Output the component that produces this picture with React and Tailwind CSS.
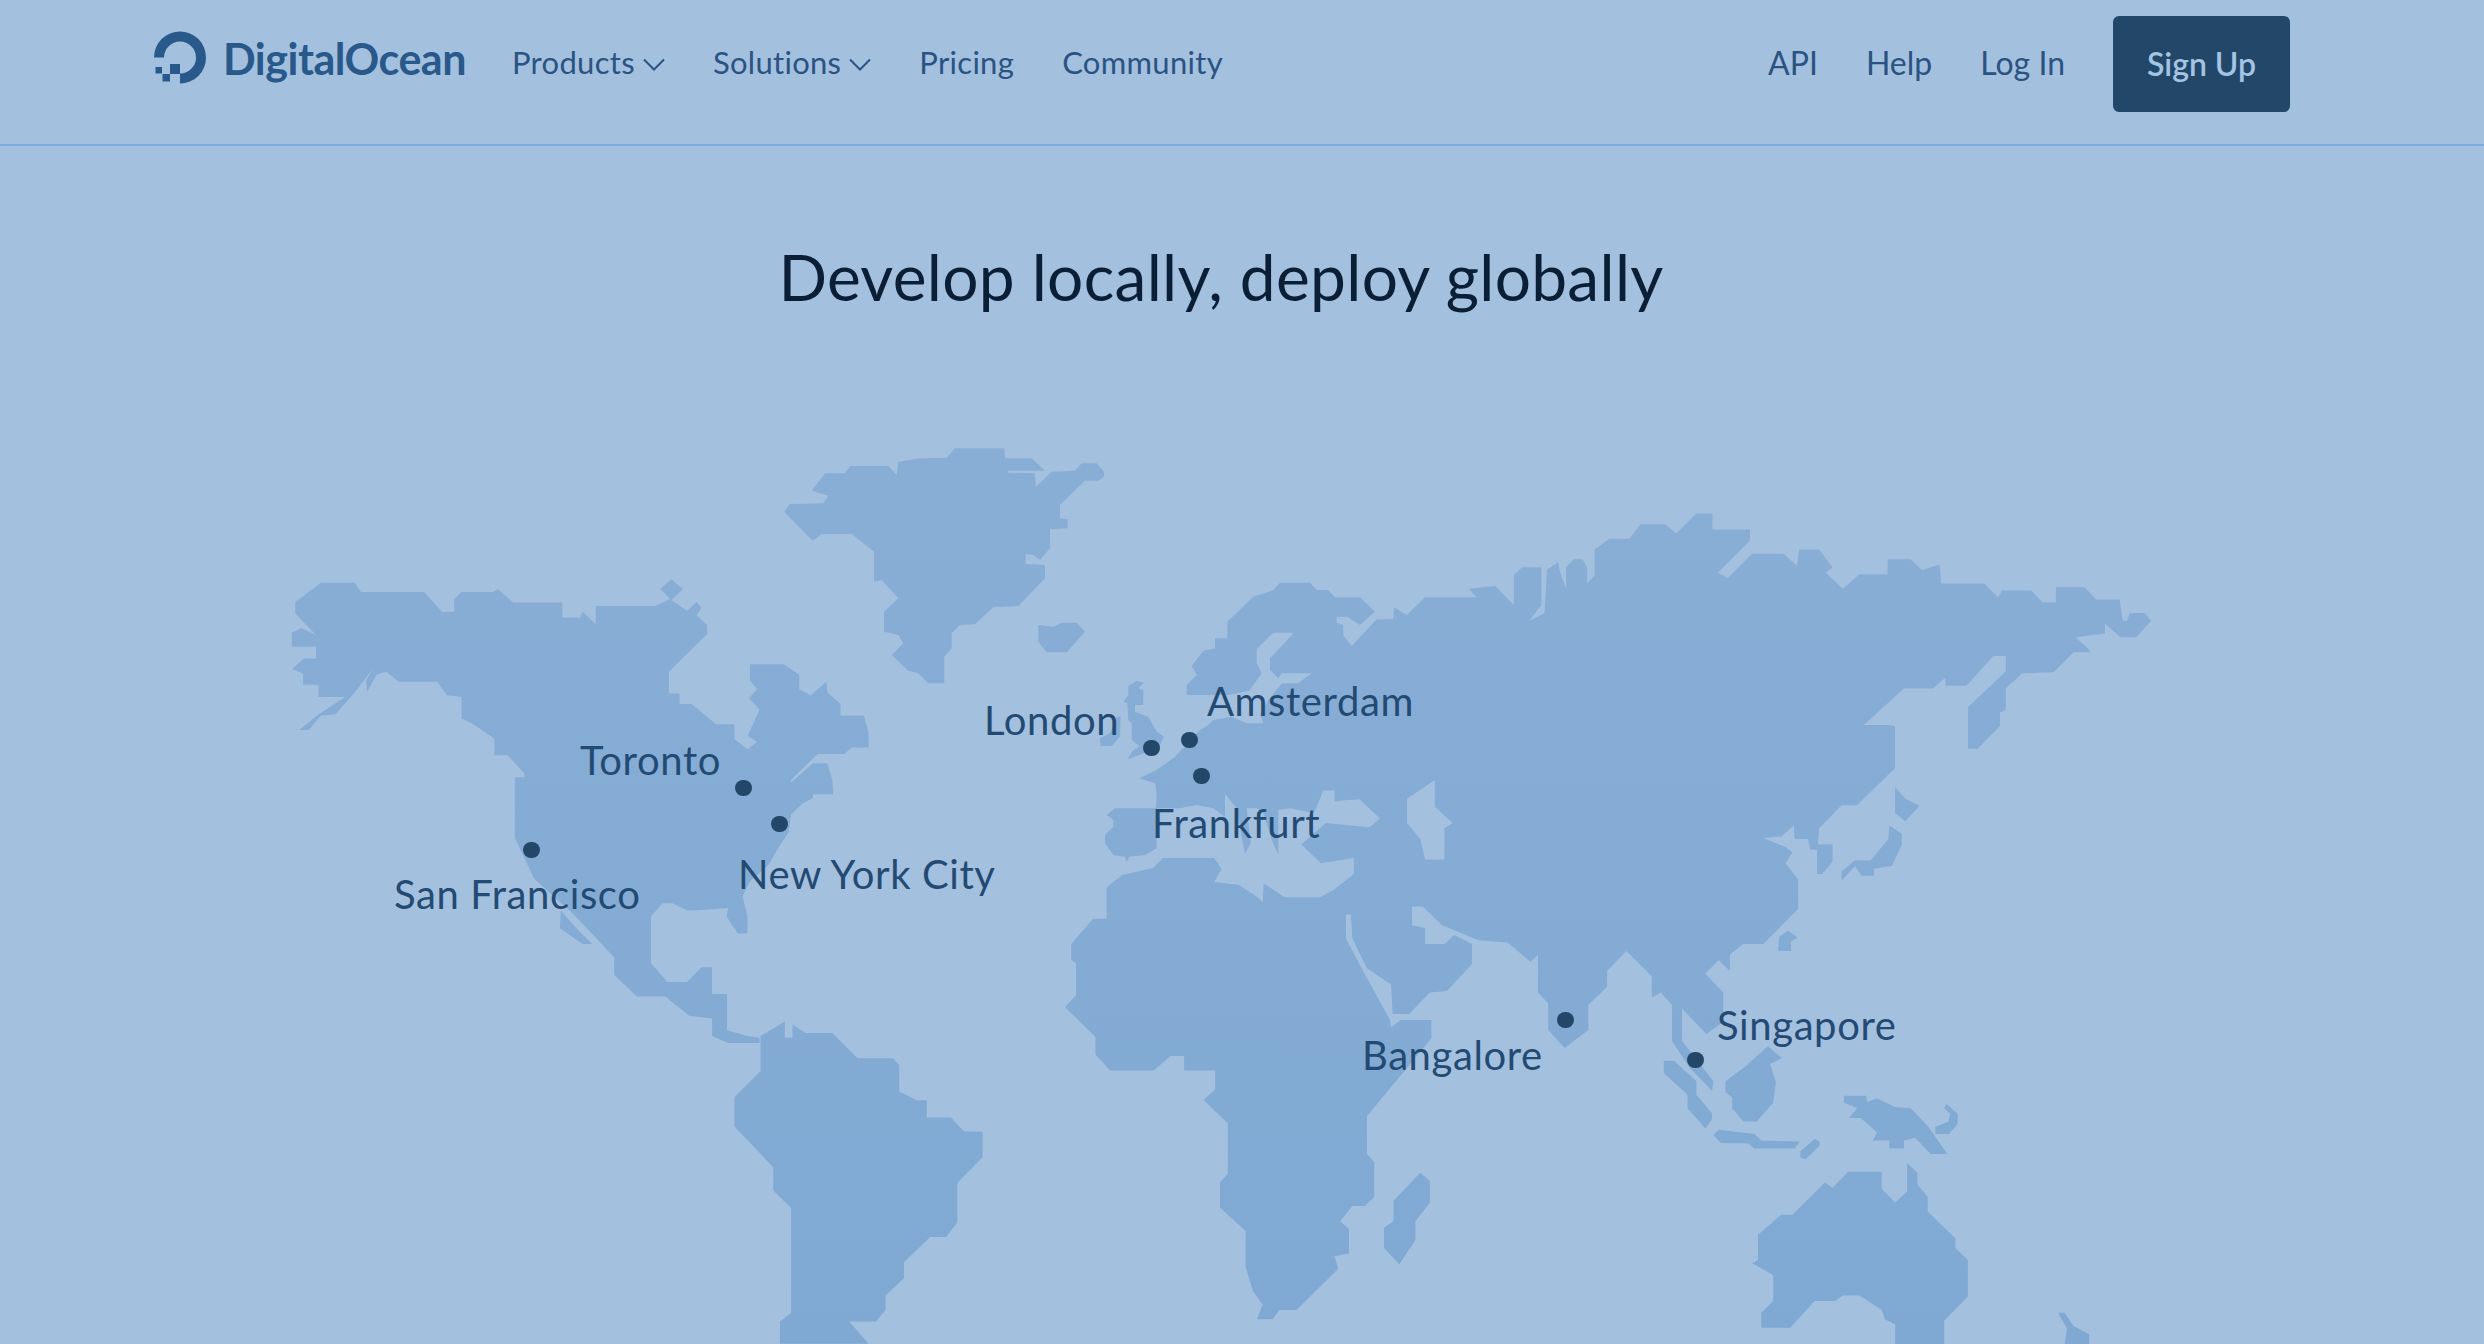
import React from 'react'

// reference crops used while tracing the map: [left, top, x zoom, y zoom]
const Z3 = [270, 430, 2.063, 1.716]
const Z4 = [1030, 500, 2.063, 1.858]
const Z5 = [1500, 500, 2.24, 1.858]
const Z6 = [770, 430, 3, 3]
const Z7 = [1090, 560, 3, 3]

const seg = (f, s) =>
    s.trim().split(/\s+/).map((p) => {
        const [x, y] = p.split(',').map(Number)
        return `${(f[0] + x / f[2]).toFixed(1)} ${(f[1] + y / f[3]).toFixed(1)}`
    })

const shape = (...parts) => 'M' + parts.flat().join('L') + 'Z'

const land = [
    // north + central america
    shape(seg(Z3, `52,295 105,262 175,262 188,278 318,278 355,312 380,312 380,290 395,278 460,278 470,273 502,296 603,296 603,322 640,322 645,312 672,333 672,302 795,302 825,290
        860,310 880,295 890,305 880,318 902,335 902,350 823,415 823,452 845,452 845,470 870,470 920,505 958,505 958,530 985,548 1005,535 985,525 1010,480 988,460 1005,445 990,430 990,402 1060,402
        1092,420 1092,445 1115,455 1148,432 1150,450 1177,470 1177,490 1225,490 1235,520 1235,545 1200,545 1185,556 1130,556 1075,600 1075,605 1120,572 1150,572 1160,600 1162,625 1120,625 1120,632
        1100,640 1075,660 1070,690 1045,722 1030,745 990,775 975,800 985,835 985,864 965,864 942,835 945,820 885,824 860,824 830,812 810,812 786,835 786,915 820,947 860,947 890,922 912,922 912,968
        943,968 943,1030 985,1040 1010,1043 1010,1052 945,1052 912,1040 912,1010 865,1005 815,972 757,972 710,935 710,905 665,865 625,830 545,770 505,700 505,596 525,596 525,590 490,558 463,558
        463,530 420,505 395,495 395,458 365,455 345,432 265,432 240,415 220,420 200,450 198,430 212,410 175,450 135,488 105,490 80,515 60,515 100,488 155,458 100,458 100,437 68,437 68,418
        45,410 70,392 95,392 95,372 45,372 45,348 65,340 95,352 52,315`)),
    shape(seg(Z3, '805,273 828,256 852,273 828,292')),
    shape(seg(Z3, '600,825 640,862 665,882 645,882 598,855')),
    // south america
    shape(seg(Z3, `1012,1040 1062,1015 1062,1043 1078,1043 1078,1020 1105,1035 1160,1035 1212,1078 1285,1078 1298,1090 1298,1135 1335,1150 1355,1150 1355,1180 1405,1180 1432,1204 1470,1204 1470,1248 1418,1292
        1418,1360 1395,1385 1362,1385 1308,1428 1308,1455 1270,1485 1270,1510 1250,1530 1195,1530 1235,1568 1052,1568 1052,1530 1075,1515 1075,1335 1038,1305 1038,1265 958,1195 958,1145 1012,1100`)),
    // greenland, iceland
    shape(seg(Z6, `42,245 60,222 160,220 175,197 125,182 165,130 225,130 240,108 355,108 380,135 385,95 450,85 530,83 555,55 703,55 705,85 785,85 825,122 715,122 715,128 795,130 797,170 845,125 915,122
        935,100 980,100 1002,125 1002,140 985,152 945,152 870,225 870,265 893,268 893,295 840,298 840,355 810,390 790,375 767,372 767,402 825,405 825,445 745,528 670,532 615,583 570,585 545,610 545,655
        523,680 523,760 475,760 445,730 415,722 365,675 400,640 385,615 342,605 342,545 385,505 335,450 312,455 312,365 245,312 155,312 128,332`)),
    shape(seg(Z6, '805,585 850,590 875,578 920,578 945,605 890,667 830,667 805,635')),
    // afro-eurasia, walked clockwise from the south of norway
    shape(
        seg(Z7, `290,405 290,375 320,345 305,318 340,272 375,265 375,235 412,235 412,185 490,110 550,90 570,68 660,68 680,90 715,90 735,112 810,112 855,155 810,195 770,170 740,172 740,188 760,195 760,225 785,258
            860,178 910,178 912,142 950,165 1005,112 1160,112 1135,85`),
        seg(Z4, '905,165 960,160 998,195 998,140 1015,125 1055,125 1055,195'),
        seg(Z5, `65,225 100,210 105,130 130,115 135,135 148,165 148,125 165,110 185,110 195,125 195,155 212,140 212,92 245,72 290,72 315,45 370,45 395,62 440,25 476,25 476,55 560,55 560,75 488,135 510,145
            565,100 635,100 665,122 670,92 715,92 745,125 730,135 768,165 805,138 868,138 868,110 920,110 945,130 985,120 988,155 1085,155 1115,180 1125,168 1190,168 1215,190 1245,190 1245,162 1310,162
            1335,185 1388,185 1395,225 1405,225 1410,210 1445,210 1458,225 1425,255 1390,255 1355,230 1355,248 1290,255 1325,283 1285,283 1240,320 1170,322 1133,350 1133,390 1120,395 1120,420 1070,462
            1048,462 1048,385 1133,318 1133,290 1105,290 1045,345 998,345 998,330 970,350 905,350 815,418 870,418 885,420 885,498 800,567 765,567 715,610 712,640 745,640 745,672 722,695 710,695 710,650
            695,650 690,630 660,630 658,605 630,625 590,628 640,645 655,655 640,675 668,705 668,760 590,825 545,825 515,845 515,875 490,855 460,880 500,915 500,970 462,992 408,945 408,1005 478,1080
            475,1098 425,1055 385,1005 385,938 360,915 340,925 340,885 283,838 240,875 240,905 198,938 198,985 145,1018 108,985 108,935 85,915 85,845 68,858`),
        seg(Z4, `985,822 925,818 850,790 810,755 788,755 788,790 815,795 815,825 855,825 875,808 912,825 912,862 860,912 825,915 782,955 748,955 745,900 695,870 665,815 662,770 652,770 652,815 690,880 742,965
            745,980 765,966 828,966 828,1000 695,1145 695,1215 710,1230 710,1295 690,1312 665,1312 640,1340 658,1355 658,1400 628,1405 636,1428 550,1505 515,1505 500,1522 468,1522 480,1495 460,1470 445,1425
            445,1358 392,1315 392,1268 408,1252 408,1158 358,1115 382,1095 382,1060 318,1060 318,1033 290,1033 255,1060 165,1060 135,1030 135,998 72,942 95,920 95,860 85,855 85,825 130,778 158,778 158,720
            190,697 254,684 274,665 380,665 395,685 380,710 430,715 470,738 480,748 482,712 525,738 598,738 625,725 668,695 668,665 600,675 560,640 610,600 700,608 722,592 680,556 650,558 628,560 628,540 605,540`),
        seg(Z7, `672,760 600,745 565,750 565,885 545,840 520,760 500,745 470,745 482,850 465,882 455,830 440,745 405,702 405,770 370,745 320,735 270,745 200,745 200,865 165,885 118,890 110,905 105,890 70,885
            45,850 45,825 70,800 70,780 50,765 75,745 198,745 200,700 195,670 148,655 200,630 255,590 330,510 355,495 370,480 425,470 470,490 520,490 510,462 535,420 575,370 625,370 665,340 575,340 565,355
            540,330 540,295 612,218 550,218 500,268 500,310 515,340 478,392 415,405`),
    ),
    // caspian
    shape(seg(Z4, '778,555 835,520 835,570 872,600 855,610 855,668 815,668 805,630 778,600')),
    // britain, ireland
    shape(seg(Z7, '140,362 162,368 145,385 160,390 160,435 135,435 135,455 175,470 200,515 222,530 205,565 112,598 130,570 150,560 125,540 125,490 115,480 112,430 100,425 115,405 115,378')),
    shape(seg(Z7, '60,520 80,470 92,470 90,530 65,558 32,558 30,535')),
    // madagascar
    shape(seg(Z4, '805,1250 825,1265 825,1305 795,1340 795,1375 762,1420 730,1390 730,1352 750,1340 750,1302')),
    // japan, taiwan
    shape(seg(Z5, '885,533 908,555 940,568 908,597 885,582')),
    shape(seg(Z5, '872,605 900,620 900,640 878,680 838,685 838,698 810,698 795,680 765,708 765,690 795,670 830,670 870,630')),
    shape(seg(Z5, '625,812 645,800 667,813 652,820 652,838 623,838')),
    // indonesia and around
    shape(seg(Z5, '505,1080 550,1052 600,1015 632,1037 605,1048 618,1082 612,1120 575,1155 545,1155 520,1130 520,1110 505,1100')),
    shape(seg(Z5, '367,1042 390,1042 440,1080 440,1105 475,1140 475,1150 460,1168 420,1130 420,1105 367,1065')),
    shape(seg(Z5, '478,1180 490,1170 570,1178 585,1190 672,1192 660,1205 570,1205 555,1195 495,1195')),
    shape(seg(Z5, '673,1210 705,1187 716,1192 715,1200 685,1225 673,1222')),
    shape(seg(Z5, '770,1107 820,1107 822,1118 845,1112 885,1128 920,1130 960,1165 1002,1215 965,1215 930,1185 905,1190 905,1205 872,1205 872,1190 835,1190 845,1175 808,1148 782,1148 800,1130 770,1120')),
    shape(seg(Z5, '1000,1122 1025,1140 1025,1160 1005,1178 975,1178 975,1165 1005,1155 1008,1140 995,1130')),
    // australia, new zealand
    shape(seg(Z5, `565,1418 578,1412 578,1365 630,1328 655,1328 728,1268 745,1278 780,1248 855,1248 855,1280 885,1305 912,1285 912,1232 935,1250 935,1272 958,1295 958,1322 1020,1372 1020,1390 1048,1412 1048,1480
        995,1525 995,1568 885,1568 885,1532 862,1522 855,1505 805,1478 768,1478 750,1488 705,1488 650,1538 585,1538 585,1510 612,1488 612,1440`)),
    shape(seg(Z5, '1250,1510 1265,1510 1285,1535 1320,1550 1320,1568 1265,1568 1270,1540')),
].join(' ')

const Logo = () => (
    <svg width="54" height="54" viewBox="153 31 54 54" fill="#28598a" className="shrink-0">
        <path d="M154 57.5A26 26 0 1 1 180 83.5V73.5A16 16 0 1 0 164 57.5Z" />
        <rect x="170" y="64" width="10" height="10" />
        <rect x="162.5" y="74" width="7.5" height="7.5" />
        <rect x="155.5" y="67" width="6.5" height="6.5" />
    </svg>
)

const Chevron = () => (
    <svg width="22" height="13" viewBox="0 0 22 13" fill="none" stroke="#2a5382" strokeWidth="2" className="mt-1">
        <path d="M1 1.5l10 10 10-10" />
    </svg>
)

const Dot = ({ className }) => <span className={`absolute h-4 w-[17px] rounded-full bg-[#234769] ${className}`} />

const Label = ({ className, children }) => (
    <span className={`absolute whitespace-nowrap text-[40px] leading-none tracking-[0.6px] text-[#234a72] ${className}`}>{children}</span>
)

const App = () => {
    return (
        <div className="h-[1344px] w-full overflow-hidden bg-[#a4c0df] font-['Lato',sans-serif]">
            <header className="flex items-center justify-between border-b-2 border-[#7eaadc] pb-[32px] pl-[153px] pr-[194px] pt-4">
                <div className="flex items-center">
                    <div className="mb-[12px] flex items-center gap-4">
                        <Logo />
                        <span className="mt-[3px] text-[43px] font-bold tracking-[-0.5px] text-[#28598a]">DigitalOcean</span>
                    </div>
                    <nav className="mb-[3px] ml-[46px] flex items-center gap-[48px] text-[31px] tracking-[0.3px] text-[#2a5382]">
                        <a className="flex items-center gap-2">Products <Chevron /></a>
                        <a className="flex items-center gap-2">Solutions <Chevron /></a>
                        <a>Pricing</a>
                        <a>Community</a>
                    </nav>
                </div>
                <div className="flex items-center gap-[48px] text-[32px] text-[#2a5382]">
                    <a className="mb-[3px]">API</a>
                    <a className="mb-[3px]">Help</a>
                    <a className="mb-[3px]">Log In</a>
                    <button className="h-24 w-[177px] rounded-md bg-[#234769] text-[32px] font-semibold text-[#a4c4e4]">Sign Up</button>
                </div>
            </header>

            <main className="pb-[85px] pr-[42px] pt-[93px]">
                <h1 className="text-center text-[64px] font-normal leading-[76px] tracking-[0.3px] text-[#0a1e36]">Develop locally, deploy globally</h1>
            </main>

            <div className="relative h-[944px]">
                <svg viewBox="0 400 2484 944" className="absolute inset-0 h-full w-full">
                    <defs>
                        <linearGradient id="land" gradientUnits="userSpaceOnUse" x1="0" y1="440" x2="0" y2="1344">
                            <stop offset="0" stopColor="#89aed6" />
                            <stop offset="1" stopColor="#7fa9d3" />
                        </linearGradient>
                    </defs>
                    <path d={land} fill="url(#land)" fillRule="evenodd" />
                </svg>

                <Dot className="left-[523px] top-[442px]" />
                <Dot className="left-[735px] top-[380px]" />
                <Dot className="left-[771px] top-[416px]" />
                <Dot className="left-[1143px] top-[340px]" />
                <Dot className="left-[1181px] top-[332px]" />
                <Dot className="left-[1193px] top-[368px]" />
                <Dot className="left-[1557px] top-[612px]" />
                <Dot className="left-[1687px] top-[652px]" />

                <Label className="left-[394px] top-[474px]">San Francisco</Label>
                <Label className="left-[580px] top-[340px]">Toronto</Label>
                <Label className="left-[738px] top-[454px]">New York City</Label>
                <Label className="left-[984px] top-[300px]">London</Label>
                <Label className="left-[1207px] top-[281px]">Amsterdam</Label>
                <Label className="left-[1152px] top-[403px]">Frankfurt</Label>
                <Label className="left-[1362px] top-[635px]">Bangalore</Label>
                <Label className="left-[1717px] top-[605px]">Singapore</Label>
            </div>
        </div>
    )
}

export default App
